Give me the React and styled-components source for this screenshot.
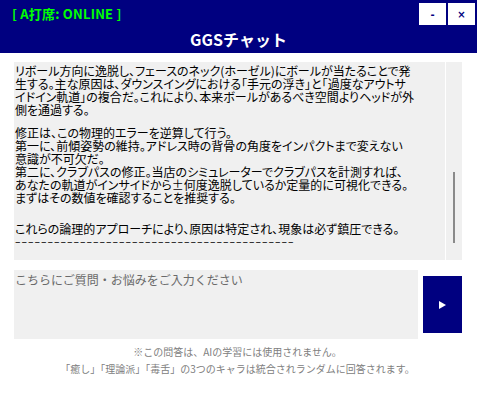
import React from "react";
import styled, { createGlobalStyle } from "styled-components";

const GlobalStyle = createGlobalStyle`
  html, body {
    margin: 0;
    padding: 0;
    background: #ffffff;
  }
  body {
    font-family: "Noto Sans CJK JP", "Noto Sans", sans-serif;
  }
`;

const paragraphs = [
  {
    gap: 0,
    lines: [
      "リボール方向に逸脱し、フェースのネック(ホーゼル)にボールが当たることで発",
      "生する。主な原因は、ダウンスイングにおける「手元の浮き」と「過度なアウトサ",
      "イドイン軌道」の複合だ。これにより、本来ボールがあるべき空間よりヘッドが外",
      "側を通過する。",
    ],
  },
  {
    gap: 10,
    lines: [
      "修正は、この物理的エラーを逆算して行う。",
      "第一に、前傾姿勢の維持。アドレス時の背骨の角度をインパクトまで変えない",
      "意識が不可欠だ。",
      "第二に、クラブパスの修正。当店のシミュレーターでクラブパスを計測すれば、",
      "あなたの軌道がインサイドから±何度逸脱しているか定量的に可視化できる。",
      "まずはその数値を確認することを推奨する。",
    ],
  },
  {
    gap: 18,
    lines: ["これらの論理的アプローチにより、原因は特定され、現象は必ず鎮圧できる。"],
  },
];

const rule = "–".repeat(43);

export default function App() {
  return (
    <>
      <GlobalStyle />
      <Window>
        <Header>
          <TopBar>
            <Status>[ A打席: ONLINE ]</Status>
            <WinButtons>
              <WinButton>-</WinButton>
              <WinButton>×</WinButton>
            </WinButtons>
          </TopBar>
          <Title>GGSチャット</Title>
        </Header>

        <Body>
          <ChatRow>
            <MessagePane>
              {paragraphs.map((p, i) => (
                <Paragraph key={i} $gap={p.gap}>
                  {p.lines.map((line, j) => (
                    <Line key={j}>{line}</Line>
                  ))}
                </Paragraph>
              ))}
              <Rule>{rule}</Rule>
            </MessagePane>
            <ScrollTrack>
              <ScrollThumb />
            </ScrollTrack>
          </ChatRow>

          <InputRow>
            <Input placeholder="こちらにご質問・お悩みをご入力ください" />
            <SendButton aria-label="send">
              <svg width="7" height="8" viewBox="0 0 7 8">
                <path d="M0 0 L7 4 L0 8 Z" fill="#ffffff" />
              </svg>
            </SendButton>
          </InputRow>

          <Notes>
            <Note>※この問答は、AIの学習には使用されません。</Note>
            <Note>「癒し」「理論派」「毒舌」の3つのキャラは統合されランダムに回答されます。</Note>
          </Notes>
        </Body>
      </Window>
    </>
  );
}

const Window = styled.div`
  width: 477px;
  height: 410px;
  display: flex;
  flex-direction: column;
  background: #ffffff;
  overflow: hidden;
`;

const Header = styled.div`
  height: 53px;
  background: #000080;
  display: flex;
  flex-direction: column;
`;

const TopBar = styled.div`
  height: 28px;
  display: flex;
  align-items: flex-start;
  justify-content: space-between;
  padding: 3px 2px 0 12px;
  box-sizing: border-box;
`;

const Status = styled.div`
  color: #00ff00;
  font-weight: 700;
  font-size: 13px;
  line-height: 22px;
  letter-spacing: 0.2px;
  white-space: pre;
`;

const WinButtons = styled.div`
  display: flex;
  gap: 2px;
`;

const WinButton = styled.div`
  width: 27px;
  height: 22px;
  background: #ffffff;
  color: #000080;
  font-family: "DejaVu Sans", sans-serif;
  font-weight: 700;
  font-size: 10px;
  display: flex;
  align-items: center;
  justify-content: center;
`;

const Title = styled.div`
  flex: 1;
  display: flex;
  align-items: center;
  justify-content: center;
  color: #ffffff;
  font-weight: 700;
  font-size: 16px;
  padding-bottom: 2px;
`;

const Body = styled.div`
  padding: 9px 15px 0 14px;
  display: flex;
  flex-direction: column;
`;

const ChatRow = styled.div`
  height: 198px;
  display: flex;
  gap: 1px;
`;

const MessagePane = styled.div`
  flex: 1;
  background: #f0f0f0;
  padding: 2px 0 0 1px;
  overflow: hidden;
  color: #000000;
  font-size: 12px;
  font-feature-settings: "palt";
`;

const Paragraph = styled.div`
  margin-top: ${(p) => p.$gap}px;
`;

const Line = styled.div`
  line-height: 13px;
  height: 13px;
  white-space: nowrap;
`;

const Rule = styled.div`
  line-height: 13px;
  height: 13px;
  font-family: "DejaVu Sans", sans-serif;
  font-size: 11px;
  letter-spacing: 1px;
  white-space: nowrap;
`;

const ScrollTrack = styled.div`
  width: 16px;
  background: #f0f0f0;
  display: flex;
  justify-content: center;
  padding-top: 110px;
  box-sizing: border-box;
`;

const ScrollThumb = styled.div`
  width: 2px;
  height: 71px;
  background: #8a8a8a;
`;

const InputRow = styled.div`
  margin-top: 10px;
  height: 69px;
  display: flex;
  align-items: center;
  gap: 5px;
`;

const Input = styled.textarea`
  flex: 1;
  height: 100%;
  box-sizing: border-box;
  border: none;
  outline: none;
  resize: none;
  background: #f0f0f0;
  padding: 3px 1px;
  margin: 0;
  font-family: "Noto Sans CJK JP", sans-serif;
  font-size: 12px;
  line-height: 14px;
  color: #000;
  &::placeholder {
    color: #6a6a6a;
  }
`;

const SendButton = styled.div`
  width: 39px;
  height: 57px;
  background: #000080;
  display: flex;
  align-items: center;
  justify-content: center;
`;

const Notes = styled.div`
  margin-top: 4px;
  display: flex;
  flex-direction: column;
  align-items: center;
  padding-right: 1px;
`;

const Note = styled.div`
  color: #808080;
  font-size: 10px;
  line-height: 17px;
  white-space: nowrap;
`;
